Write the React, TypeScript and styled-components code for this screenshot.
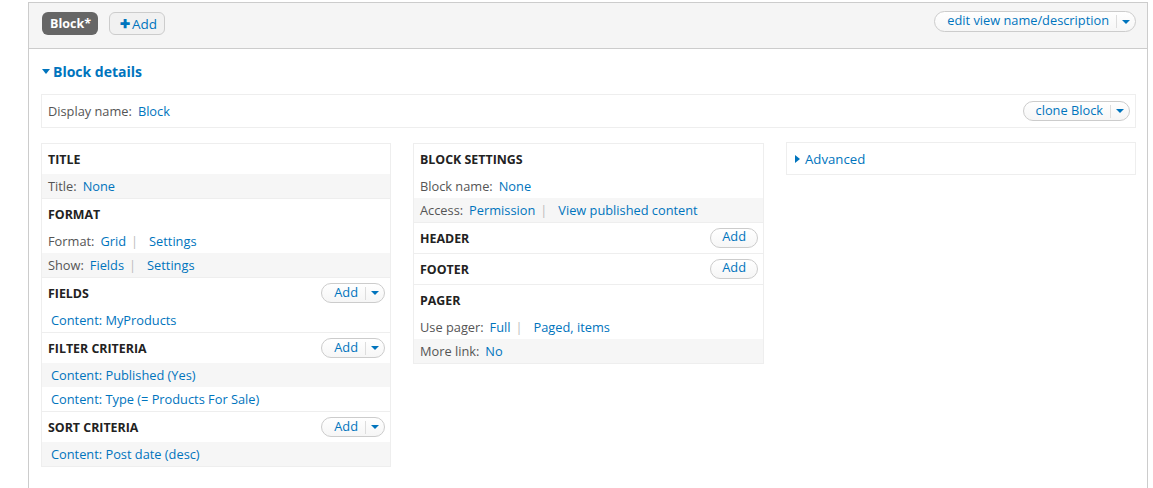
import React from "react";
import styled, { createGlobalStyle } from "styled-components";

const GlobalStyle = createGlobalStyle`
  body {
    margin: 0;
    background: #fff;
    font-family: "Open Sans", "Noto Sans", Arial, sans-serif;
    font-size: 12.8px;
    color: #333;
  }
`;

type Row = { label?: string; links: string[]; striped?: boolean; indent?: boolean };
type Section = { title: string; action?: "drop" | "plain"; rows: Row[] };

const leftColumn: Section[] = [
  { title: "TITLE", rows: [{ label: "Title:", links: ["None"], striped: true }] },
  {
    title: "FORMAT",
    rows: [
      { label: "Format:", links: ["Grid", "Settings"] },
      { label: "Show:", links: ["Fields", "Settings"], striped: true },
    ],
  },
  { title: "FIELDS", action: "drop", rows: [{ links: ["Content: MyProducts"], indent: true }] },
  {
    title: "FILTER CRITERIA",
    action: "drop",
    rows: [
      { links: ["Content: Published (Yes)"], striped: true, indent: true },
      { links: ["Content: Type (= Products For Sale)"], indent: true },
    ],
  },
  {
    title: "SORT CRITERIA",
    action: "drop",
    rows: [{ links: ["Content: Post date (desc)"], striped: true, indent: true }],
  },
];

const middleColumn: Section[] = [
  {
    title: "BLOCK SETTINGS",
    rows: [
      { label: "Block name:", links: ["None"] },
      { label: "Access:", links: ["Permission", "View published content"], striped: true },
    ],
  },
  { title: "HEADER", action: "plain", rows: [] },
  { title: "FOOTER", action: "plain", rows: [] },
  {
    title: "PAGER",
    rows: [
      { label: "Use pager:", links: ["Full", "Paged, items"] },
      { label: "More link:", links: ["No"], striped: true },
    ],
  },
];

const DropButton = ({ label, wide }: { label: string; wide?: boolean }) => (
  <Pill $wide={wide}>
    <PillLabel>{label}</PillLabel>
    <Toggle>
      <Caret />
    </Toggle>
  </Pill>
);

const SectionBlock = ({ section }: { section: Section }) => (
  <SectionWrap>
    <SectionHead>
      <SectionTitle>{section.title}</SectionTitle>
      {section.action === "drop" && <DropButton label="Add" />}
      {section.action === "plain" && <PlainPill>Add</PlainPill>}
    </SectionHead>
    {section.rows.map((row, i) => (
      <ItemRow key={i} $striped={row.striped} $indent={row.indent}>
        {row.label && <Label>{row.label}</Label>}
        {row.links.map((l, j) => (
          <React.Fragment key={j}>
            {j > 0 && <Sep>|</Sep>}
            <Link>{l}</Link>
          </React.Fragment>
        ))}
      </ItemRow>
    ))}
  </SectionWrap>
);

const App = () => {
  return (
    <>
      <GlobalStyle />
      <Page>
        <Frame>
          <TopBar>
            <Tabs>
              <ActiveTab>Block*</ActiveTab>
              <AddTab>
                <Plus>✚</Plus>Add
              </AddTab>
            </Tabs>
            <DropButton label="edit view name/description" wide />
          </TopBar>
          <Body>
            <Summary>
              <DownArrow />
              Block details
            </Summary>
            <DisplayBar>
              <div>
                <Label>Display name:</Label>
                <Link>Block</Link>
              </div>
              <DropButton label="clone Block" />
            </DisplayBar>
            <Columns>
              <Column>
                {leftColumn.map((s) => (
                  <SectionBlock key={s.title} section={s} />
                ))}
              </Column>
              <Column>
                {middleColumn.map((s) => (
                  <SectionBlock key={s.title} section={s} />
                ))}
              </Column>
              <AdvancedBox>
                <RightArrow />
                Advanced
              </AdvancedBox>
            </Columns>
          </Body>
        </Frame>
      </Page>
    </>
  );
};

export default App;

const Page = styled.div`
  padding: 2px 5px 0 28px;
  height: 486px;
  overflow: hidden;
`;
const Frame = styled.div`
  border: 1px solid #ccc;
  border-bottom: none;
  min-height: 486px;
`;
const TopBar = styled.div`
  height: 46px;
  box-sizing: border-box;
  background: #f5f5f5;
  border-bottom: 1px solid #ccc;
  display: flex;
  justify-content: space-between;
  align-items: flex-start;
  padding: 7px 11px 0 13px;
`;
const Tabs = styled.div`
  display: flex;
  gap: 11px;
  margin-top: 2px;
`;
const ActiveTab = styled.div`
  height: 23px;
  box-sizing: border-box;
  padding: 0 7px 0 8px;
  display: flex;
  align-items: center;
  background: #666;
  color: #fff;
  font-weight: bold;
  font-size: 12.5px;
  border-radius: 6px;
`;
const AddTab = styled.div`
  height: 23px;
  box-sizing: border-box;
  padding: 0 7px 0 10px;
  display: flex;
  align-items: center;
  background: #f1f1f1;
  border: 1px solid #ccc;
  border-radius: 6px;
  color: #0074bd;
  font-size: 13.5px;
`;
const Plus = styled.span`
  font-size: 12px;
  font-weight: bold;
  margin-right: 2px;
`;
const Pill = styled.div<{ $wide?: boolean }>`
  display: inline-flex;
  align-items: center;
  height: ${(p) => (p.$wide ? "21px" : "20px")};
  box-sizing: border-box;
  border: 1px solid #ccc;
  border-radius: 11px;
  background: linear-gradient(#fff, #f6f6f6);
  padding-left: 12px;
  margin-top: ${(p) => (p.$wide ? "1px" : "0")};
`;
const PillLabel = styled.span`
  color: #0074bd;
  font-size: 12.8px;
  padding-right: 7px;
  line-height: 1;
  margin-top: -2px;
`;
const Toggle = styled.span`
  height: 13px;
  border-left: 1px solid #ddd;
  padding: 0 5px;
  display: flex;
  align-items: center;
`;
const Caret = styled.span`
  width: 0;
  height: 0;
  border-left: 4px solid transparent;
  border-right: 4px solid transparent;
  border-top: 4px solid #0074bd;
`;
const PlainPill = styled.div`
  height: 20px;
  box-sizing: border-box;
  border: 1px solid #ccc;
  border-radius: 11px;
  background: linear-gradient(#fff, #f6f6f6);
  padding: 0 11px 3px;
  color: #0074bd;
  font-size: 12.8px;
  display: flex;
  align-items: center;
  line-height: 1;
`;
const Body = styled.div`
  padding: 0 11px 0 12px;
`;
const Summary = styled.div`
  display: flex;
  align-items: center;
  margin-top: 12px;
  height: 20px;
  color: #0074bd;
  font-weight: bold;
  font-size: 14px;
`;
const DownArrow = styled.span`
  width: 0;
  height: 0;
  border-left: 4px solid transparent;
  border-right: 4px solid transparent;
  border-top: 5px solid #0074bd;
  margin: 1px 3px 0 1px;
`;
const RightArrow = styled.span`
  width: 0;
  height: 0;
  border-top: 4px solid transparent;
  border-bottom: 4px solid transparent;
  border-left: 5px solid #0074bd;
  margin: 0 5px 0 0;
`;
const DisplayBar = styled.div`
  margin-top: 13px;
  height: 34px;
  box-sizing: border-box;
  border: 1px solid #eee;
  display: flex;
  align-items: center;
  justify-content: space-between;
  padding: 0 5px 0 6px;
`;
const Columns = styled.div`
  margin-top: 15px;
  display: grid;
  grid-template-columns: 350px 351px 350px;
  column-gap: 22px;
  align-items: start;
`;
const Column = styled.div`
  border: 1px solid #eee;
`;
const SectionWrap = styled.div`
  & + & {
    border-top: 1px solid #eee;
  }
`;
const SectionHead = styled.div`
  height: 30px;
  display: flex;
  align-items: center;
  justify-content: space-between;
  padding: 0 5px 0 6px;
`;
const SectionTitle = styled.div`
  font-weight: bold;
  font-size: 12.4px;
  color: #222;
`;
const ItemRow = styled.div<{ $striped?: boolean; $indent?: boolean }>`
  height: 24px;
  display: flex;
  align-items: center;
  padding-left: ${(p) => (p.$indent ? "9px" : "6px")};
  background: ${(p) => (p.$striped ? "#f6f6f6" : "#fff")};
`;
const Label = styled.span`
  color: #555;
  margin-right: 6px;
`;
const Link = styled.span`
  color: #0074bd;
`;
const Sep = styled.span`
  color: #bbb;
  margin: 0 11px 0 5px;
`;
const AdvancedBox = styled.div`
  border: 1px solid #eee;
  height: 33px;
  box-sizing: border-box;
  display: flex;
  align-items: center;
  padding-left: 8px;
  color: #0074bd;
  font-size: 13.2px;
  margin-top: -1px;
`;
